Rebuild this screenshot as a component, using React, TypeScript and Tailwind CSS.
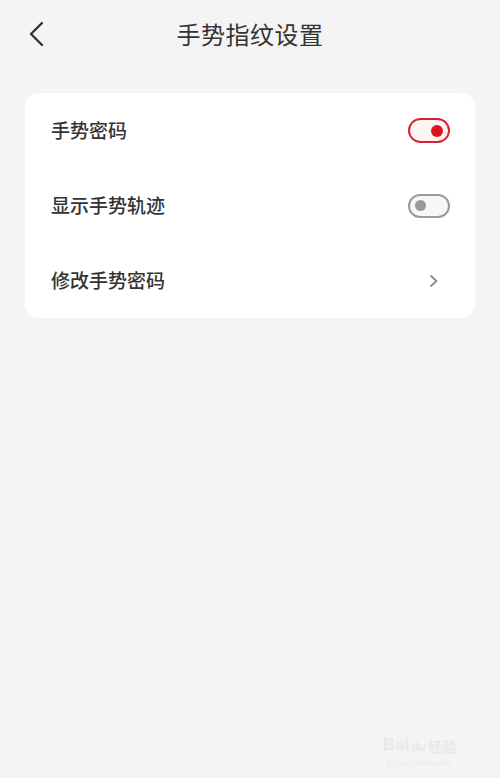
import React from "react";

const font = { fontFamily: '"Noto Sans CJK SC", "Noto Sans", sans-serif' };

function Toggle({ on }: { on: boolean }) {
  return on ? (
    <div className="w-[42px] h-[25px] rounded-full border-2 border-[#d8232f] bg-[#fdf4f4] flex items-center justify-end pr-[5px]">
      <div className="w-[12px] h-[12px] rounded-full bg-[#e0121f]" />
    </div>
  ) : (
    <div className="w-[42px] h-[24px] rounded-full border-2 border-[#9a9a9a] bg-[#f7f7f7] flex items-center justify-start pl-[5px]">
      <div className="w-[11px] h-[11px] rounded-full bg-[#9a9a9a]" />
    </div>
  );
}

export default function App() {
  return (
    <div className="relative w-[500px] h-[778px] bg-[#f4f4f4] overflow-hidden" style={font}>
      <div className="relative h-[68px] flex items-center justify-center">
        <svg className="absolute left-[26px] top-[20px]" width="22" height="28" viewBox="0 0 22 28">
          <path d="M16 3 L5 14 L16 25" fill="none" stroke="#333" strokeWidth="2.4" strokeLinecap="round" strokeLinejoin="round" />
        </svg>
        <div className="text-[24px] leading-none text-[#333] tracking-[0.5px]">手势指纹设置</div>
      </div>
      <div className="mx-[25px] mt-[25px] bg-white rounded-[14px] flex flex-col">
        <div className="h-[75px] flex items-center justify-between pl-[26px] pr-[25px]">
          <span className="text-[19px] font-medium text-[#333]">手势密码</span>
          <Toggle on />
        </div>
        <div className="h-[75px] flex items-center justify-between pl-[26px] pr-[25px]">
          <span className="text-[19px] font-medium text-[#333]">显示手势轨迹</span>
          <Toggle on={false} />
        </div>
        <div className="h-[75px] flex items-center justify-between pl-[26px] pr-[36px]">
          <span className="text-[19px] font-medium text-[#333]">修改手势密码</span>
          <svg width="10" height="14" viewBox="0 0 10 14">
            <path d="M2 2 L7.5 7 L2 12" fill="none" stroke="#8a8a8a" strokeWidth="1.8" strokeLinecap="round" strokeLinejoin="round" />
          </svg>
        </div>
      </div>
      <div className="absolute left-[383px] top-[736px] flex items-end gap-[2px] text-[#e8e8e8] leading-none">
        <span className="text-[17px] font-bold leading-none" style={{ fontFamily: '"Liberation Sans", sans-serif' }}>Bai</span>
        <span className="text-[12px] font-bold leading-none" style={{ fontFamily: '"Liberation Sans", sans-serif' }}>du</span>
        <span className="text-[14px] font-bold leading-none">经验</span>
      </div>
      <div className="absolute left-[387px] top-[759px] text-[8px] leading-none text-[#ececec]" style={{ fontFamily: '"Liberation Sans", sans-serif' }}>
        jingyan.baidu.com
      </div>
    </div>
  );
}
